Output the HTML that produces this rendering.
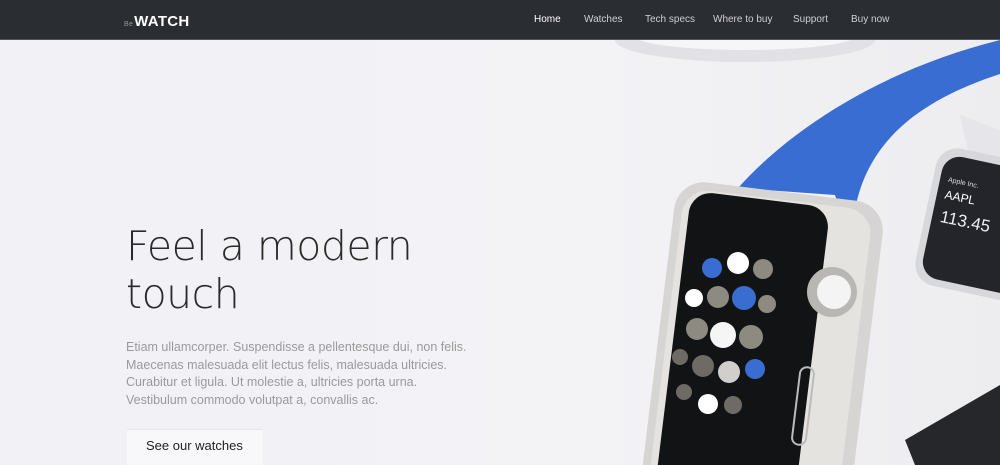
<!DOCTYPE html>
<html><head><style>
html,body{margin:0;width:1000px;height:465px;overflow:hidden}
body{background:linear-gradient(90deg,#f2f1f6 0%,#f3f3f6 60%,#ededf0 100%);font-family:"Liberation Sans",sans-serif;position:relative}
.nav{position:absolute;left:0;top:0;width:1000px;height:39px;background:#2a2d31;border-bottom:1px solid #555}
.logo{position:absolute;left:124px;top:13px;color:#fff;font-weight:bold;font-size:15px;letter-spacing:.3px}
.logo small{font-size:7px;font-weight:normal;color:#999;margin-right:1px}
.menu a{position:absolute;top:14px;color:#cfd0d3;font-size:10px;text-decoration:none}
h1{position:absolute;left:126px;top:222px;margin:0;font-size:41px;line-height:48px;color:#2a2a2a;font-family:"DejaVu Sans","Liberation Sans",sans-serif;font-weight:200;letter-spacing:-.5px}
p{position:absolute;left:126px;top:339px;margin:0;font-size:12.5px;line-height:17.5px;color:#9a9a9c}
.btn{position:absolute;left:127px;top:429px;width:135px;height:36px;background:#f8f8fa;border-top:1px solid #e6e6ea}
.btn span{position:absolute;left:19px;top:8px;font-size:13px;color:#222}
svg{position:absolute;left:0;top:0;overflow:hidden;display:block}
</style></head><body>
<svg width="1000" height="465" viewBox="0 0 1000 465">
<ellipse cx="745" cy="40" rx="130" ry="22" fill="#e2e2e6"/>
<ellipse cx="745" cy="36" rx="110" ry="14" fill="#f6f6f8"/>
<path d="M1000 130 L960 115 L970 160 L1000 170Z" fill="#e6e6ea"/>
<g transform="rotate(12 960 220)"><rect x="925" y="150" width="110" height="140" rx="22" fill="#d8d8dc"/><rect x="932" y="158" width="100" height="125" rx="18" fill="#23252a"/>
<text x="940" y="185" fill="#ddd" font-size="7">Apple Inc.</text><text x="940" y="202" fill="#fff" font-size="12">AAPL</text><text x="940" y="226" fill="#eee" font-size="17">113.45</text></g>
<path d="M738 188 C790 130 880 70 1000 40 L1000 74 C920 100 870 140 856 205 L858 222 Q845 228 840 210 L835 195Z" fill="#3a6dd1"/>
<g transform="rotate(7 760 330)">
<rect x="660" y="190" width="210" height="320" rx="30" fill="#d6d5d3"/>
<rect x="668" y="198" width="190" height="312" rx="26" fill="#e4e3e0"/>
<rect x="675" y="200" width="140" height="312" rx="22" fill="#121314"/>
</g>
<circle cx="832" cy="292" r="25" fill="#b8b7b4"/><circle cx="834" cy="292" r="17" fill="#f4f4f4"/>
<rect x="796" y="367" width="14" height="78" rx="7" fill="none" stroke="#bbb" stroke-width="2" transform="rotate(7 803 406)"/>
<g>
<circle cx="712" cy="268" r="10" fill="#3a6dd1"/><circle cx="738" cy="263" r="11" fill="#fff"/><circle cx="763" cy="269" r="10" fill="#8d8a82"/>
<circle cx="694" cy="298" r="9" fill="#fff"/><circle cx="718" cy="297" r="11" fill="#8d8a82"/><circle cx="744" cy="298" r="12" fill="#3a6dd1"/><circle cx="767" cy="304" r="9" fill="#8d8a82"/>
<circle cx="697" cy="329" r="11" fill="#8d8a82"/><circle cx="723" cy="335" r="13" fill="#f5f5f5"/><circle cx="751" cy="337" r="12" fill="#8d8a82"/>
<circle cx="680" cy="357" r="8" fill="#6e6b66"/><circle cx="703" cy="366" r="11" fill="#6e6b66"/><circle cx="729" cy="372" r="11" fill="#d0cfcc"/><circle cx="755" cy="369" r="10" fill="#3a6dd1"/>
<circle cx="684" cy="392" r="8" fill="#6e6b66"/><circle cx="708" cy="404" r="10" fill="#fff"/><circle cx="733" cy="405" r="9" fill="#6e6b66"/>
</g>
<path d="M905 440 L1000 385 L1000 465 L915 465Z" fill="#25272b"/>
</svg>
<div class="nav"><div class="logo"><small>Be</small>WATCH</div>
<div class="menu"><a style="left:534px;color:#fff">Home</a><a style="left:584px">Watches</a><a style="left:645px">Tech specs</a><a style="left:713px">Where to buy</a><a style="left:793px">Support</a><a style="left:851px">Buy now</a></div></div>
<h1>Feel a modern<br>touch</h1>
<p>Etiam ullamcorper. Suspendisse a pellentesque dui, non felis.<br>Maecenas malesuada elit lectus felis, malesuada ultricies.<br>Curabitur et ligula. Ut molestie a, ultricies porta urna.<br>Vestibulum commodo volutpat a, convallis ac.</p>
<div class="btn"><span>See our watches</span></div>
</body></html>
